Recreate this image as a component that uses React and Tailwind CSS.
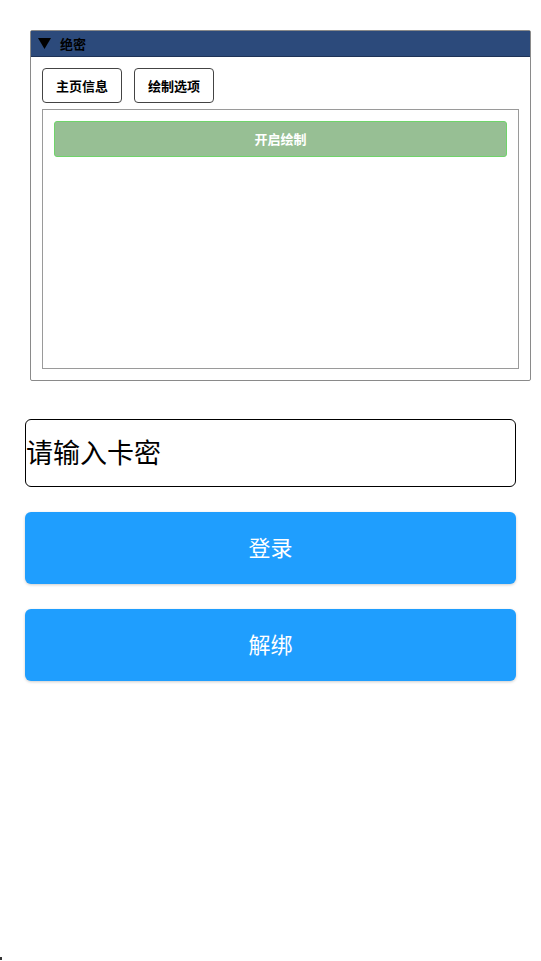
export default function App() {
  return (
    <div
      className="w-[541px] h-[961px] bg-white relative"
      style={{ fontFamily: '"Noto Sans CJK SC", "Noto Sans", sans-serif' }}
    >
      <div className="pt-[30px] px-[30px]">
        <div className="w-[501px] h-[351px] border border-[#8a8a8a] rounded-[2px] flex flex-col">
          <div className="h-[26px] bg-[#2c4a7b] flex items-center pl-[7px] gap-[9px] border-b border-[#1e3357]">
            <svg width="13" height="11" viewBox="0 0 13 11">
              <path d="M0 0 H13 L6.5 11 Z" fill="#000" />
            </svg>
            <span className="text-[13px] font-bold text-black leading-none">绝密</span>
          </div>
          <div className="flex-1 px-[11px] pt-[11px] pb-[11px] flex flex-col">
            <div className="flex gap-[12px]">
              <button className="w-[80px] h-[35px] border border-[#444] rounded-[4px] text-[13px] font-bold text-black bg-white">
                主页信息
              </button>
              <button className="w-[80px] h-[35px] border border-[#444] rounded-[4px] text-[13px] font-bold text-black bg-white">
                绘制选项
              </button>
            </div>
            <div className="mt-[6px] flex-1 border border-[#9a9a9a] px-[11px] pt-[11px]">
              <button className="w-full h-[36px] bg-[#97bf94] border border-[#6fd46a] rounded-[3px] text-white text-[13px] font-bold">
                开启绘制
              </button>
            </div>
          </div>
        </div>
      </div>

      <div className="px-[25px] mt-[38px] flex flex-col">
        <div className="w-[491px] h-[68px] border border-black rounded-[6px] flex items-center">
          <span className="text-[27px] text-black leading-none mb-[3px]">请输入卡密</span>
        </div>
        <button className="mt-[25px] w-[491px] h-[72px] pb-[3px] bg-[#1f9efe] rounded-[6px] text-white text-[22px] shadow-[0_1px_3px_rgba(0,0,0,0.2)]">
          登录
        </button>
        <button className="mt-[25px] w-[491px] h-[72px] pb-[3px] bg-[#1f9efe] rounded-[6px] text-white text-[22px] shadow-[0_1px_3px_rgba(0,0,0,0.2)]">
          解绑
        </button>
      </div>

      <div className="absolute left-0 top-[957px] w-[2px] h-[3px] bg-[#333]" />
    </div>
  );
}
